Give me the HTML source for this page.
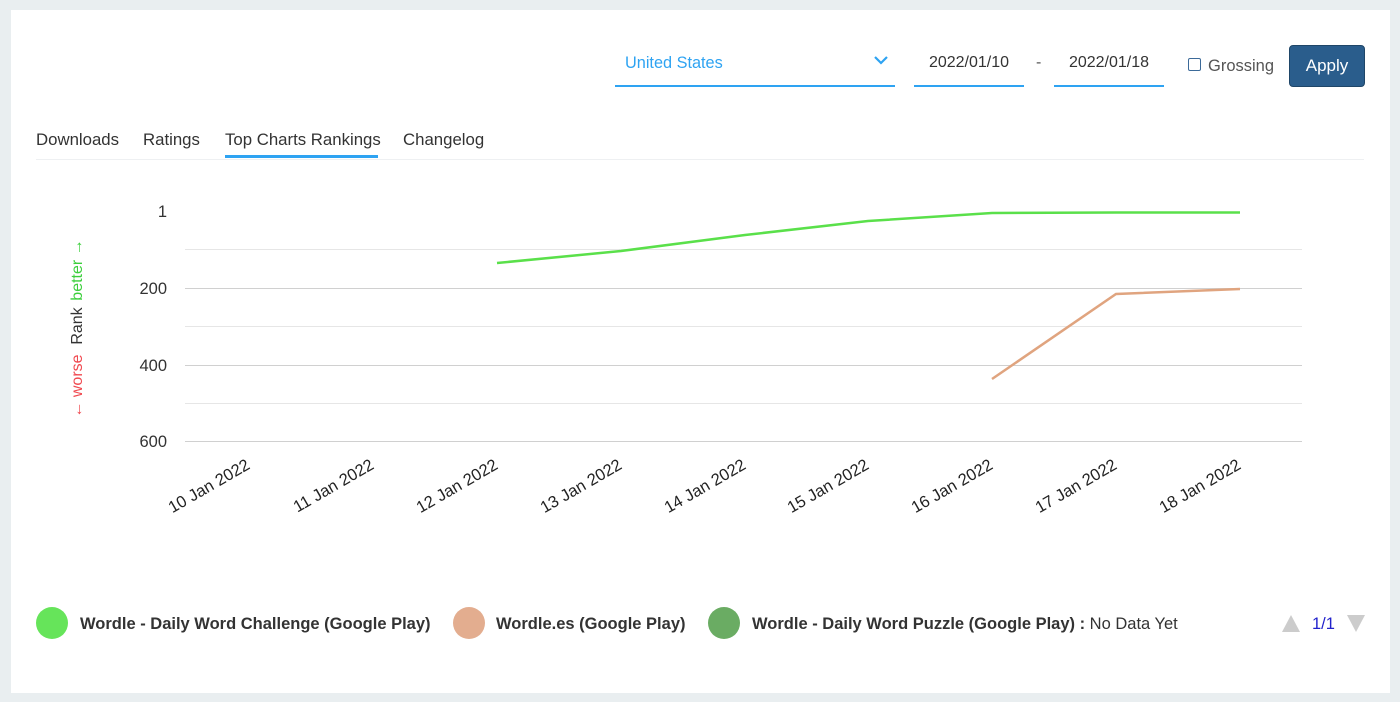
<!DOCTYPE html>
<html><head><meta charset="utf-8"><style>
body{margin:0;width:1400px;height:702px;background:#e9eef0;font-family:"Liberation Sans",sans-serif;overflow:hidden;position:relative}
.card{position:absolute;left:11px;top:10px;width:1379px;height:683px;background:#fff}
.abs{position:absolute}
</style></head><body>
<div class="card"></div>
<div class="abs" style="left:615px;top:52px;width:280px;height:33px;border-bottom:2px solid #2ea3f2;color:#2ea3f2;font-size:16.3px"><span style="position:absolute;left:10px;top:2px">United States</span>
<svg style="position:absolute;left:258px;top:3px" width="16" height="12"><path d="M2 2 L8 8 L14 2" stroke="#2ea3f2" stroke-width="2.2" fill="none"/></svg></div>
<div class="abs" style="left:914px;top:52px;width:110px;height:33px;border-bottom:2px solid #2ea3f2;color:#333;font-size:16px;text-align:center;line-height:22px">2022/01/10</div>
<div class="abs" style="left:1036px;top:52px;color:#555;font-size:16px;line-height:22px">-</div>
<div class="abs" style="left:1054px;top:52px;width:110px;height:33px;border-bottom:2px solid #2ea3f2;color:#333;font-size:16px;text-align:center;line-height:22px">2022/01/18</div>
<div class="abs" style="left:1188px;top:58px;width:11px;height:11px;border:1.5px solid #3c6a99;border-radius:2px"></div>
<div class="abs" style="left:1208px;top:55px;color:#555;font-size:16.5px;line-height:22px">Grossing</div>
<div class="abs" style="left:1289px;top:45px;width:74px;height:40px;background:#2a5d8c;border:1px solid #1f4668;border-radius:4px;color:#fff;font-size:17px;text-align:center;line-height:40px">Apply</div>
<div class="abs" style="left:36px;top:130px;font-size:16.8px;color:#333">Downloads</div>
<div class="abs" style="left:143px;top:130px;font-size:16.8px;color:#333">Ratings</div>
<div class="abs" style="left:225px;top:130px;font-size:16.8px;color:#333">Top Charts Rankings</div>
<div class="abs" style="left:225px;top:155px;width:153px;height:3px;background:#2ea3f2"></div>
<div class="abs" style="left:403px;top:130px;font-size:16.8px;color:#333">Changelog</div>
<div class="abs" style="left:36px;top:159px;width:1328px;height:1px;background:#eef0f2"></div>
<svg class="abs" style="left:0;top:0" width="1400" height="702" font-family="Liberation Sans, sans-serif">
<g stroke="#e6e6e6" stroke-width="1"><line x1="185" x2="1302" y1="249.5" y2="249.5"/><line x1="185" x2="1302" y1="326.5" y2="326.5"/><line x1="185" x2="1302" y1="403.5" y2="403.5"/></g>
<g stroke="#d0d0d0" stroke-width="1"><line x1="185" x2="1302" y1="288.5" y2="288.5"/><line x1="185" x2="1302" y1="365.5" y2="365.5"/><line x1="185" x2="1302" y1="441.5" y2="441.5"/></g>
<g font-size="16.5" fill="#333" text-anchor="end"><text x="167" y="217">1</text><text x="167" y="294">200</text><text x="167" y="371">400</text><text x="167" y="447">600</text></g>
<g transform="translate(82,326) rotate(-90)" font-size="16" text-anchor="middle"><text x="-60" y="0" fill="#f0484f">← worse</text><text x="0" y="0" fill="#333">Rank</text><text x="56" y="0" fill="#3ccf3c">better →</text></g>
<g font-size="16.5" fill="#222" text-anchor="end">
<text transform="translate(251,468) rotate(-30)">10 Jan 2022</text>
<text transform="translate(375,468) rotate(-30)">11 Jan 2022</text>
<text transform="translate(499,468) rotate(-30)">12 Jan 2022</text>
<text transform="translate(623,468) rotate(-30)">13 Jan 2022</text>
<text transform="translate(747,468) rotate(-30)">14 Jan 2022</text>
<text transform="translate(870,468) rotate(-30)">15 Jan 2022</text>
<text transform="translate(994,468) rotate(-30)">16 Jan 2022</text>
<text transform="translate(1118,468) rotate(-30)">17 Jan 2022</text>
<text transform="translate(1242,468) rotate(-30)">18 Jan 2022</text></g>
<polyline points="497,263 621,251 745,235 868,221 992,213 1116,212.5 1240,212.5" fill="none" stroke="#5ae04a" stroke-width="2.5"/>
<polyline points="992,379 1116,294 1240,289" fill="none" stroke="#e0a47f" stroke-width="2.5"/>
<circle cx="52" cy="623" r="16" fill="#66e45a"/><circle cx="469" cy="623" r="16" fill="#e3ad8f"/><circle cx="724" cy="623" r="16" fill="#6aac63"/>
<g font-size="16.5" fill="#333"><text x="80" y="629" font-weight="bold">Wordle - Daily Word Challenge (Google Play)</text>
<text x="496" y="629" font-weight="bold">Wordle.es (Google Play)</text>
<text x="752" y="629"><tspan font-weight="bold">Wordle - Daily Word Puzzle (Google Play) :</tspan> No Data Yet</text>
<text x="1312" y="629" fill="#2222cc">1/1</text></g>
<path d="M1282 632 L1291 615 L1300 632Z" fill="#ccc"/><path d="M1347 615 L1365 615 L1356 632Z" fill="#ccc"/>
</svg>
</body></html>
